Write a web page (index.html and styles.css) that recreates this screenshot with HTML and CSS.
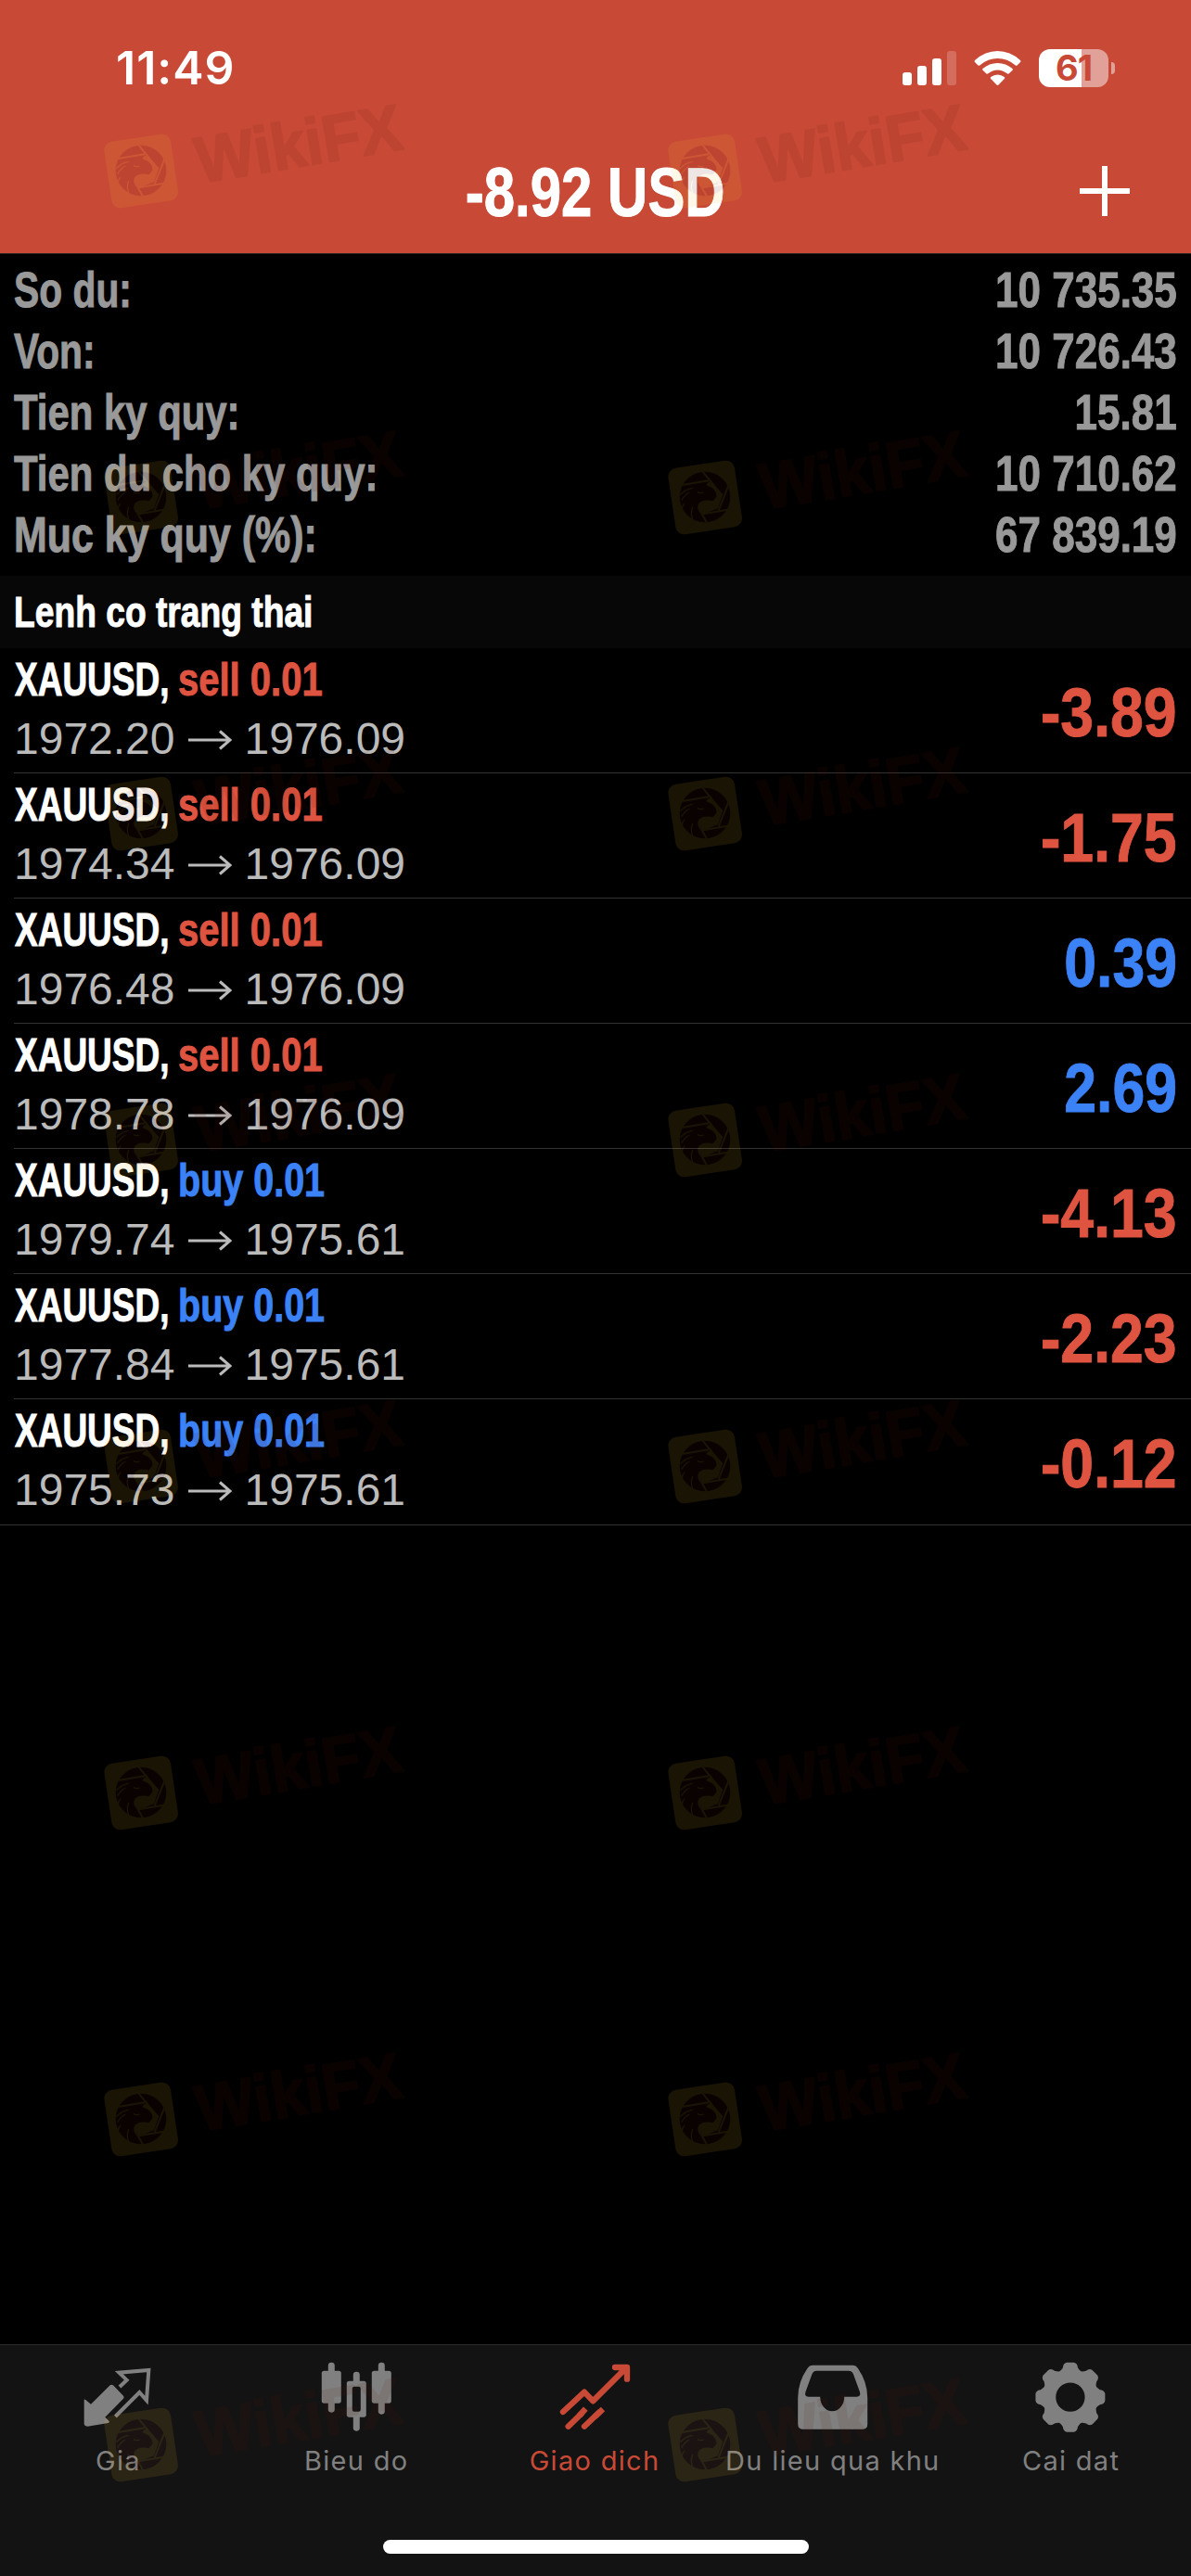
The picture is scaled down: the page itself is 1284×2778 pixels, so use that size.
FILE: index.html
```
<!DOCTYPE html>
<html lang="vi">
<head>
  <meta charset="UTF-8">
  <meta name="viewport" content="width=device-width, initial-scale=1.0">
  <title>Giao dich</title>
  <link rel="stylesheet" href="styles.css">
</head>
<body>

  <!-- Header -->
  <div class="header">
    <div class="status-bar">
      <span class="time">11:49</span>
      <div class="status-icons">
        <svg class="signal" width="58" height="37" viewBox="0 0 58 37" fill="#fff">
          <rect x="0" y="23" width="10" height="14" rx="3"/>
          <rect x="16" y="16" width="10" height="21" rx="3"/>
          <rect x="32" y="8" width="10" height="29" rx="3"/>
          <rect x="48" y="0" width="10" height="37" rx="3" opacity="0.2"/>
        </svg>
        <svg class="wifi" width="51" height="37" viewBox="0 0 51 37" fill="#fff">
          <path d="M1 10Q0 11 1 12L4.500 15.500Q5.500 16.200 6.500 15.300Q15 8 25.500 8T44.500 15.300Q45.500 16.200 46.500 15.500L50 12Q51 11 50 10Q39 0 25.500 0T1 10Z"/>
          <path d="M9.500 19Q8.700 20 9.500 20.800L13.500 24.500Q14.500 25 15.300 24.300Q20 20.500 25.500 20.500T35.700 24.300Q36.500 25 37.500 24.500L41.500 20.800Q42.300 20 41.500 19Q34.500 13 25.500 13T9.500 19Z"/>
          <path d="M18.200 28Q17.300 29 18.200 30L24.500 36.500Q25.500 37.400 26.500 36.500L32.800 30Q33.700 29 32.800 28Q29.500 25.500 25.500 25.500T18.200 28Z"/>
        </svg>
        <div class="battery">
          <span class="battery-level">61</span>
          <span class="battery-tip"></span>
        </div>
      </div>
    </div>
    <div class="nav-bar">
      <h1 class="narrow">-8.92 USD</h1>
      <svg class="plus" width="54" height="54" viewBox="0 0 54 54" fill="#fff">
        <rect x="0" y="24" width="54" height="6"/>
        <rect x="24" y="0" width="6" height="54"/>
      </svg>
    </div>
  </div>

  <!-- Account Summary -->
  <div class="summary">
    <div class="summary-row"><span class="narrow label label-short">So du:</span><span class="narrow value">10 735.35</span></div>
    <div class="summary-row"><span class="narrow label label-short">Von:</span><span class="narrow value">10 726.43</span></div>
    <div class="summary-row"><span class="narrow label">Tien ky quy:</span><span class="narrow value">15.81</span></div>
    <div class="summary-row"><span class="narrow label">Tien du cho ky quy:</span><span class="narrow value">10 710.62</span></div>
    <div class="summary-row"><span class="narrow label label-percent">Muc ky quy (%):</span><span class="narrow value">67 839.19</span></div>
  </div>

  <h2 class="section-title"><span class="narrow">Lenh co trang thai</span></h2>

  <!-- Open Positions -->
  <div class="positions" id="positions"></div>

  <!-- Tab Bar -->
  <div class="tab-bar">
    <div class="tab">
      <svg class="tab-icon" viewBox="250 100 270 270">
        <path fill="currentColor" d="M273 236Q274 232 278 235L295 249L357 188Q362 184 367 188L400 222Q404 227 400 231L341 291L354 304Q356 308 351 310L284 321Q273 321 273 311Z"/>
        <path fill="none" stroke="currentColor" stroke-width="12" d="M388 193L411 171L386 147L482 139L475 237L452 211L374 289"/>
      </svg>
      <span>Gia</span>
    </div>
    <div class="tab">
      <svg class="tab-icon" viewBox="1020.600 100 270 270" fill="currentColor">
        <rect x="1062" y="114" width="21" height="162" rx="10"/>
        <rect x="1041" y="141" width="63" height="105" rx="8"/>
        <rect x="1224" y="114" width="21" height="168" rx="10"/>
        <rect x="1203" y="141" width="63" height="105" rx="8"/>
        <rect x="1143" y="144" width="21" height="40" rx="10"/>
        <rect x="1143" y="280" width="21" height="56" rx="10"/>
        <path fill-rule="evenodd" d="M1130 174H1177Q1185 174 1185 182V283Q1185 291 1177 291H1130Q1122 291 1122 283V182Q1122 174 1130 174ZM1146 192Q1140 192 1140 198V267Q1140 273 1146 273H1161Q1167 273 1167 267V198Q1167 192 1161 192Z"/>
      </svg>
      <span>Bieu do</span>
    </div>
    <div class="tab active">
      <svg class="tab-icon" viewBox="291 100 270 270" fill="none" stroke="currentColor" stroke-width="19" stroke-linecap="round" stroke-linejoin="round">
        <path d="M321 274L390 210L418 239L526 131M489 130H528V168"/>
        <path d="M338 321L380 280M390 321L437 276"/>
        <path stroke-linecap="butt" d="M374 286L394 264M424 290L450 265"/>
      </svg>
      <span>Giao dich</span>
    </div>
    <div class="tab">
      <svg class="tab-icon" viewBox="1061.400 100 270 270">
        <path fill="currentColor" fill-rule="evenodd" d="M1128 123H1257Q1268 123 1274 133Q1305 178 1305 228V314Q1305 330 1290 330H1095Q1080 330 1080 314V228Q1080 178 1111 133Q1117 123 1128 123ZM1141 141Q1130 141 1126 151L1105 209Q1100 225 1114 225H1152A39 47 0 0 0 1230 225H1270Q1285 225 1280 209L1259 151Q1255 141 1244 141Z"/>
      </svg>
      <span>Du lieu qua khu</span>
    </div>
    <div class="tab">
      <svg class="tab-icon" viewBox="679.800 100 270 270">
        <path id="gear" fill="currentColor" fill-rule="evenodd" d=""/>
      </svg>
      <span>Cai dat</span>
    </div>
  </div>
  <div class="home-area"><div class="home-indicator"></div></div>

  <!-- Watermark layer, filled by script -->
  <svg class="watermarks" viewBox="0 0 1284 2778">
    <defs>
      <g id="wikifx" transform="scale(0.33333)">
        <rect x="78" y="172" width="217" height="217" rx="28" fill="#ffbe32" transform="rotate(-8.500 186.500 280.500)"/>
        <circle cx="186" cy="279" r="82" fill="#5a190a"/>
        <g fill="none" stroke="#ffbe32" stroke-width="6">
          <path d="M112 240L198 226M178 196L232 262M262 242L230 322M268 319L178 334M174 330L192 362"/>
          <path stroke-width="4" d="M106 272Q122 254 146 250M110 290Q120 272 136 264M162 263Q172 268 182 264M120 300Q108 312 112 328M146 312Q138 332 146 352"/>
        </g>
        <path fill="#ffbe32" d="M198 230L206 232L244 270L228 316L176 336Q156 318 166 300Q180 284 212 292L224 276Q222 252 198 244L190 240Z"/>
        <text x="376" y="320" font-size="212" font-weight="bold" textLength="672" lengthAdjust="spacingAndGlyphs" fill="#5a190a" stroke="#5a190a" stroke-width="6" stroke-linejoin="round" transform="rotate(-9.500 376 320)">WikiFX</text>
      </g>
    </defs>
    <g id="marks"></g>
  </svg>

  <script>
    const positions = [
      { side: 'sell', open: '1972.20', current: '1976.09', profit: '-3.89' },
      { side: 'sell', open: '1974.34', current: '1976.09', profit: '-1.75' },
      { side: 'sell', open: '1976.48', current: '1976.09', profit: '0.39' },
      { side: 'sell', open: '1978.78', current: '1976.09', profit: '2.69' },
      { side: 'buy', open: '1979.74', current: '1975.61', profit: '-4.13' },
      { side: 'buy', open: '1977.84', current: '1975.61', profit: '-2.23' },
      { side: 'buy', open: '1975.73', current: '1975.61', profit: '-0.12' }
    ];

    // Render the open positions
    document.getElementById('positions').innerHTML = positions.map(p => `
      <div class="position">
        <div class="position-info">
          <div class="position-title">
            <span class="narrow symbol">XAUUSD,</span>
            <span class="narrow side ${p.side}">${p.side} 0.01</span>
          </div>
          <div class="position-prices">
            <span>${p.open}</span>
            <svg class="arrow" width="47" height="22" viewBox="0 0 47 22" fill="none" stroke="currentColor" stroke-width="3">
              <path d="M0 11H45M34 1.500L45 11L34 20.500"/>
            </svg>
            <span>${p.current}</span>
          </div>
        </div>
        <span class="narrow profit ${p.profit < 0 ? 'loss' : 'gain'}">${p.profit}</span>
      </div>
    `).join('');

    // Gear outline: eight rounded teeth around the hub
    let gear = '';
    const point = (r, deg) => {
      const a = deg * Math.PI / 180;
      return (808.5 + r * Math.sin(a)).toFixed(1) + ' ' + (226.5 - r * Math.cos(a)).toFixed(1);
    };
    for (let i = 0; i < 8; i++) {
      const a = i * 45;
      gear += `${i ? 'L' : 'M'}${point(91, a - 21)}Q${point(94, a - 17)} ${point(99, a - 14)}` +
        `Q${point(112, a - 12)} ${point(113, a - 6)}L${point(113, a + 6)}` +
        `Q${point(112, a + 12)} ${point(99, a + 14)}Q${point(94, a + 17)} ${point(91, a + 21)}`;
    }
    gear += 'ZM761.500 226.500a47 47 0 1 0 94 0a47 47 0 1 0 -94 0Z';
    document.getElementById('gear').setAttribute('d', gear);

    // Repeat the watermark in two columns
    const rows = [91, 443, 784, 1136, 1488, 1840, 2192, 2543];
    document.getElementById('marks').innerHTML = rows.map(y =>
      `<use href="#wikifx" x="90" y="${y}" opacity="0.1"/><use href="#wikifx" x="698" y="${y}" opacity="0.1"/>`
    ).join('');
  </script>

</body>
</html>
```
FILE: styles.css
```
* {
  margin: 0;
  padding: 0;
  box-sizing: border-box;
}
body {
  position: relative;
  width: 1284px;
  height: 2778px;
  overflow: hidden;
  display: flex;
  flex-direction: column;
  background-color: #000;
  color: #fff;
  font-family: "Liberation Sans", Arial, sans-serif;
}

/* Condensed bold text */
.narrow {
  display: inline-block;
  font-weight: bold;
  white-space: nowrap;
  transform: scaleX(0.8);
  transform-origin: left center;
  -webkit-text-stroke: 1px currentColor;
}

/* Header */
.header {
  height: 274px;
  background-color: #c84a36;
  border-bottom: 1px solid #2a2220;
}
.status-bar {
  height: 146px;
  padding: 0 82px 0 125px;
  display: flex;
  justify-content: space-between;
  align-items: center;
}
.time {
  font-family: Inter, sans-serif;
  font-size: 50px;
  font-weight: 600;
  letter-spacing: 1px;
}
.status-icons {
  display: flex;
  align-items: center;
  gap: 19px;
}
.battery {
  display: flex;
  align-items: center;
  gap: 3px;
}
.battery-level {
  width: 75px;
  height: 41px;
  border-radius: 12px;
  background: linear-gradient(to right, #fff 46px, #e2a198 46px);
  color: #c84a36;
  font-family: Inter, sans-serif;
  font-size: 38px;
  font-weight: 700;
  line-height: 41px;
  letter-spacing: -1px;
  text-align: center;
}
.battery-tip {
  width: 4px;
  height: 13px;
  border-radius: 0 4px 4px 0;
  background-color: #e2a198;
}
.nav-bar {
  height: 127px;
  padding: 0 66px 4px;
  display: grid;
  grid-template-columns: 54px 1fr 54px;
  align-items: center;
}
.nav-bar h1 {
  grid-column: 2;
  justify-self: center;
  font-size: 74px;
  line-height: 80px;
  transform: scaleX(0.81);
  transform-origin: center;
}
.plus {
  margin-top: -3px;
}

/* Account summary */
.summary {
  padding: 6px 15px 11px;
  color: #999;
  font-size: 53px;
  line-height: 66px;
}
.summary-row {
  display: flex;
  justify-content: space-between;
}
.label {
  transform: scaleX(0.79);
}
.label-short {
  transform: scaleX(0.77);
}
.label-percent {
  transform: scaleX(0.81);
}
.value {
  transform: scaleX(0.83);
  transform-origin: right center;
}
.section-title {
  height: 78px;
  padding-left: 15px;
  background-color: #070707;
  font-size: 46.5px;
  line-height: 78px;
}

/* Positions */
.position {
  height: 135px;
  margin-left: 15px;
  padding-right: 15px;
  display: flex;
  justify-content: space-between;
  border-bottom: 1px solid #333;
}
.position:last-child {
  height: 136px;
  margin-left: 0;
  padding-left: 15px;
}
.position-title {
  display: flex;
  font-size: 50px;
  line-height: 69px;
}
.symbol {
  width: 176px;
  margin-left: 1px;
  transform: scaleX(0.74);
}
.side {
  transform: scaleX(0.8);
}
.side.buy {
  transform: scaleX(0.79);
}
.position-prices {
  display: flex;
  align-items: center;
  color: #bbb;
  font-size: 48px;
  line-height: 58px;
}
.arrow {
  margin: 2px 14px 0;
}
.profit {
  font-size: 74px;
  line-height: 139px;
  transform: scaleX(0.87);
  transform-origin: right center;
}
.profit.gain {
  transform: scaleX(0.845);
}
.sell, .loss {
  color: #df5440;
}
.buy, .gain {
  color: #3b82f7;
}

/* Tab bar */
.tab-bar {
  height: 211px;
  margin-top: auto;
  padding-top: 14px;
  display: flex;
  background-color: #131313;
  border-top: 1px solid #2a2a2a;
  color: #808080;
}
.tab {
  flex: 1 1 0;
  display: flex;
  flex-direction: column;
  align-items: center;
  font-family: Inter, sans-serif;
  font-size: 29px;
  font-weight: 400;
  line-height: 37px;
  letter-spacing: 1.3px;
  white-space: nowrap;
}
.tab span {
  margin-right: 2px;
}
.tab-icon {
  width: 90px;
  height: 90px;
  margin-bottom: 2px;
}
.tab.active {
  color: #c84a36;
}
.home-area {
  height: 39px;
  display: flex;
  justify-content: center;
  background-color: #131313;
}
.home-indicator {
  width: 459px;
  height: 15px;
  border-radius: 8px;
  background-color: #fff;
}

/* Watermark overlay */
.watermarks {
  position: absolute;
  top: 0;
  left: 0;
  width: 1284px;
  height: 2778px;
  pointer-events: none;
}
```
